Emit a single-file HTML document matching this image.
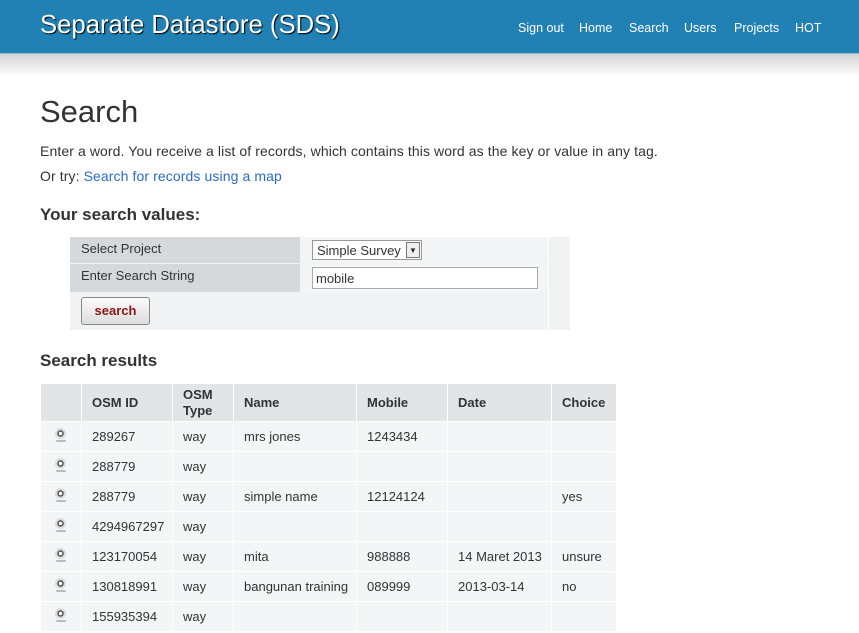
<!DOCTYPE html>
<html><head><meta charset="utf-8"><style>
body{margin:0;font-family:"Liberation Sans",Arial,sans-serif;font-size:14px;color:#333;background:#fff;width:859px;height:633px;overflow:hidden;position:relative}
.hdr{position:absolute;left:0;top:0;width:859px;height:53px;background:#2180b4;border-bottom:1px solid #8fbcd6}
.sh{position:absolute;left:0;top:54px;width:859px;height:22px;background:linear-gradient(#d4d4d4,#fff)}
.brand{position:absolute;left:40px;top:11px;color:#fff;font-size:25.7px;text-shadow:1px 1px 1px #000}
.nav{position:absolute;top:21px;color:#fff;font-size:12.5px}
h1{position:absolute;left:40px;top:94px;margin:0;font-size:31px;font-weight:normal;color:#333}
.p{position:absolute;left:40px;font-size:14px;letter-spacing:0.1px}
a{color:#2a6bc5;text-decoration:none}
h3{position:absolute;left:40px;margin:0;font-size:17px;font-weight:bold;color:#333}
.ft{position:absolute;left:70px;top:237px;width:500px;height:93px;background:#f0f2f3}
.c{position:absolute;box-sizing:border-box}
table.r{position:absolute;left:40px;top:383px;border-collapse:collapse;font-size:13px;table-layout:fixed;width:576px}
table.r td,table.r th{border:1px solid #fff;padding:0 0 0 10px;text-align:left;height:30px;white-space:nowrap;overflow:hidden;box-sizing:border-box}
table.r th{background:#e2e4e5;height:38px;font-weight:bold;color:#333}
table.r td{background:#f3f5f6;color:#333}
.eye{display:inline-block;width:11px;height:11px;border-radius:50%;background:radial-gradient(circle,#fff 0 1.5px,#555 2px 3px,#ddd 3.5px 5.5px,#888 6px);position:relative;top:-2px}
.eye:after{content:"";position:absolute;left:1px;top:12px;width:10px;height:2px;background:#bbb;border-radius:1px}
</style></head><body>
<div class="hdr"></div><div class="sh"></div>
<div class="brand">Separate Datastore (SDS)</div>
<div class="nav" style="left:518px">Sign out</div>
<div class="nav" style="left:579px">Home</div>
<div class="nav" style="left:629px">Search</div>
<div class="nav" style="left:684px">Users</div>
<div class="nav" style="left:734px">Projects</div>
<div class="nav" style="left:795px">HOT</div>
<h1>Search</h1>
<div class="p" style="top:143px">Enter a word. You receive a list of records, which contains this word as the key or value in any tag.</div>
<div class="p" style="top:168px">Or try: <a>Search for records using a map</a></div>
<h3 style="top:205px">Your search values:</h3>
<div class="ft"></div>
<div class="c" style="left:70px;top:237px;width:230px;height:26px;background:#d5d9dc;padding:4px 11px;font-size:13px">Select Project</div>
<div class="c" style="left:70px;top:264px;width:230px;height:28px;background:#d5d9dc;padding:4px 11px;font-size:13px">Enter Search String</div>
<div class="c" style="left:301px;top:237px;width:247px;height:26px;background:#f3f5f6"></div>
<div class="c" style="left:301px;top:264px;width:247px;height:28px;background:#f3f5f6"></div>
<div class="c" style="left:548px;top:237px;width:1px;height:93px;background:#fff"></div>
<div class="c" style="left:312px;top:240px;width:110px;height:20px;border:1px solid #999;background:#fff;font-size:13px;padding:2px 4px">Simple Survey<span style="position:absolute;right:1px;top:1px;width:14px;height:16px;border:1px solid #777;background:#eee;font-size:8px;text-align:center;line-height:16px;box-sizing:border-box">▼</span></div>
<div class="c" style="left:312px;top:267px;width:226px;height:22px;border:1px solid #aaa;background:#fff;font-size:13px;padding:3px 3px">mobile</div>
<div class="c" style="left:81px;top:297px;width:69px;height:28px;border:1px solid #888;border-radius:3px;background:linear-gradient(#fafafa,#ddd);color:#8b1414;font-weight:bold;font-size:13px;text-align:center;line-height:26px">search</div>
<h3 style="top:351px">Search results</h3>
<table class="r">
<colgroup><col style="width:41px"><col style="width:91px"><col style="width:61px"><col style="width:123px"><col style="width:91px"><col style="width:104px"><col style="width:65px"></colgroup>
<tr><th></th><th>OSM ID</th><th style="line-height:16px">OSM<br>Type</th><th>Name</th><th>Mobile</th><th>Date</th><th>Choice</th></tr>
<tr><td style="padding-left:14px"><span class="eye"></span></td><td>289267</td><td>way</td><td>mrs jones</td><td>1243434</td><td></td><td></td></tr>
<tr><td style="padding-left:14px"><span class="eye"></span></td><td>288779</td><td>way</td><td></td><td></td><td></td><td></td></tr>
<tr><td style="padding-left:14px"><span class="eye"></span></td><td>288779</td><td>way</td><td>simple name</td><td>12124124</td><td></td><td>yes</td></tr>
<tr><td style="padding-left:14px"><span class="eye"></span></td><td>4294967297</td><td>way</td><td></td><td></td><td></td><td></td></tr>
<tr><td style="padding-left:14px"><span class="eye"></span></td><td>123170054</td><td>way</td><td>mita</td><td>988888</td><td>14 Maret 2013</td><td>unsure</td></tr>
<tr><td style="padding-left:14px"><span class="eye"></span></td><td>130818991</td><td>way</td><td>bangunan training</td><td>089999</td><td>2013-03-14</td><td>no</td></tr>
<tr><td style="padding-left:14px"><span class="eye"></span></td><td>155935394</td><td>way</td><td></td><td></td><td></td><td></td></tr>
</table>
</body></html>
